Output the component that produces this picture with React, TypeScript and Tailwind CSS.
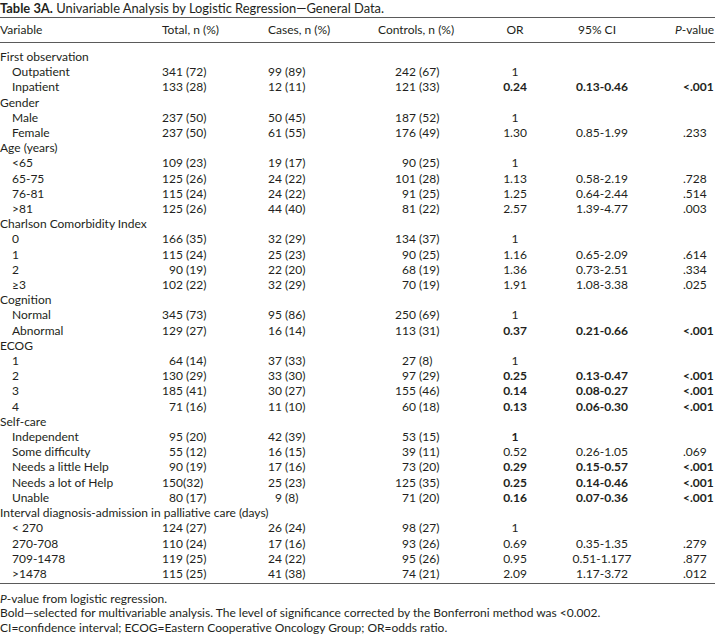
type Row = {
  label: string;
  group?: boolean;
  total?: [string, string];
  cases?: [string, string];
  controls?: [string, string];
  or?: string;
  ci?: string;
  p?: string;
  bold?: boolean;
  boldOr?: boolean;
};

const ROWS: Row[] = [
  { label: "First observation", group: true },
  { label: "Outpatient", total: ["341", " (72)"], cases: ["99", " (89)"], controls: ["242", " (67)"], or: "1" },
  { label: "Inpatient", total: ["133", " (28)"], cases: ["12", " (11)"], controls: ["121", " (33)"], or: "0.24", ci: "0.13-0.46", p: "<.001", bold: true },
  { label: "Gender", group: true },
  { label: "Male", total: ["237", " (50)"], cases: ["50", " (45)"], controls: ["187", " (52)"], or: "1" },
  { label: "Female", total: ["237", " (50)"], cases: ["61", " (55)"], controls: ["176", " (49)"], or: "1.30", ci: "0.85-1.99", p: ".233" },
  { label: "Age (years)", group: true },
  { label: "<65", total: ["109", " (23)"], cases: ["19", " (17)"], controls: ["90", " (25)"], or: "1" },
  { label: "65-75", total: ["125", " (26)"], cases: ["24", " (22)"], controls: ["101", " (28)"], or: "1.13", ci: "0.58-2.19", p: ".728" },
  { label: "76-81", total: ["115", " (24)"], cases: ["24", " (22)"], controls: ["91", " (25)"], or: "1.25", ci: "0.64-2.44", p: ".514" },
  { label: ">81", total: ["125", " (26)"], cases: ["44", " (40)"], controls: ["81", " (22)"], or: "2.57", ci: "1.39-4.77", p: ".003" },
  { label: "Charlson Comorbidity Index", group: true },
  { label: "0", total: ["166", " (35)"], cases: ["32", " (29)"], controls: ["134", " (37)"], or: "1" },
  { label: "1", total: ["115", " (24)"], cases: ["25", " (23)"], controls: ["90", " (25)"], or: "1.16", ci: "0.65-2.09", p: ".614" },
  { label: "2", total: ["90", " (19)"], cases: ["22", " (20)"], controls: ["68", " (19)"], or: "1.36", ci: "0.73-2.51", p: ".334" },
  { label: "≥3", total: ["102", " (22)"], cases: ["32", " (29)"], controls: ["70", " (19)"], or: "1.91", ci: "1.08-3.38", p: ".025" },
  { label: "Cognition", group: true },
  { label: "Normal", total: ["345", " (73)"], cases: ["95", " (86)"], controls: ["250", " (69)"], or: "1" },
  { label: "Abnormal", total: ["129", " (27)"], cases: ["16", " (14)"], controls: ["113", " (31)"], or: "0.37", ci: "0.21-0.66", p: "<.001", bold: true },
  { label: "ECOG", group: true },
  { label: "1", total: ["64", " (14)"], cases: ["37", " (33)"], controls: ["27", " (8)"], or: "1" },
  { label: "2", total: ["130", " (29)"], cases: ["33", " (30)"], controls: ["97", " (29)"], or: "0.25", ci: "0.13-0.47", p: "<.001", bold: true },
  { label: "3", total: ["185", " (41)"], cases: ["30", " (27)"], controls: ["155", " (46)"], or: "0.14", ci: "0.08-0.27", p: "<.001", bold: true },
  { label: "4", total: ["71", " (16)"], cases: ["11", " (10)"], controls: ["60", " (18)"], or: "0.13", ci: "0.06-0.30", p: "<.001", bold: true },
  { label: "Self-care", group: true },
  { label: "Independent", total: ["95", " (20)"], cases: ["42", " (39)"], controls: ["53", " (15)"], or: "1", boldOr: true },
  { label: "Some difficulty", total: ["55", " (12)"], cases: ["16", " (15)"], controls: ["39", " (11)"], or: "0.52", ci: "0.26-1.05", p: ".069" },
  { label: "Needs a little Help", total: ["90", " (19)"], cases: ["17", " (16)"], controls: ["73", " (20)"], or: "0.29", ci: "0.15-0.57", p: "<.001", bold: true },
  { label: "Needs a lot of Help", total: ["150", "(32)"], cases: ["25", " (23)"], controls: ["125", " (35)"], or: "0.25", ci: "0.14-0.46", p: "<.001", bold: true },
  { label: "Unable", total: ["80", " (17)"], cases: ["9", " (8)"], controls: ["71", " (20)"], or: "0.16", ci: "0.07-0.36", p: "<.001", bold: true },
  { label: "Interval diagnosis-admission in palliative care (days)", group: true },
  { label: "< 270", total: ["124", " (27)"], cases: ["26", " (24)"], controls: ["98", " (27)"], or: "1" },
  { label: "270-708", total: ["110", " (24)"], cases: ["17", " (16)"], controls: ["93", " (26)"], or: "0.69", ci: "0.35-1.35", p: ".279" },
  { label: "709-1478", total: ["119", " (25)"], cases: ["24", " (22)"], controls: ["95", " (26)"], or: "0.95", ci: "0.51-1.177", p: ".877" },
  { label: ">1478", total: ["115", " (25)"], cases: ["41", " (38)"], controls: ["74", " (21)"], or: "2.09", ci: "1.17-3.72", p: ".012" },
];

const GRID = "grid grid-cols-[162px_106px_127px_95px_50px_124px_51px]";

function Count({ value, w }: { value?: [string, string]; w: string }) {
  if (!value) return <span />;
  return (
    <span className="flex whitespace-pre">
      <span className={`${w} text-right`}>{value[0]}</span>
      <span>{value[1]}</span>
    </span>
  );
}

export default function App() {
  return (
    <div
      className="w-[715px] bg-white text-[12px] leading-[15.2px] text-[#231f20]"
      style={{ fontFamily: "Lato, 'Liberation Sans', sans-serif" }}
    >
      <div className="h-[17px] whitespace-nowrap text-[12.9px] leading-[16px]">
        <span className="font-bold">Table 3A.</span> Univariable Analysis by Logistic Regression—General Data.
      </div>

      <div className="border-t border-b border-[#5a5a5a]">
        <div className={`${GRID} h-[24px] items-center`}>
          <span>Variable</span>
          <span>Total, n (%)</span>
          <span>Cases, n (%)</span>
          <span className="-ml-[17px] whitespace-nowrap">Controls, n (%)</span>
          <span className="text-center">OR</span>
          <span className="pr-[10px] text-center">95% CI</span>
          <span className="whitespace-nowrap pl-[11px]">
            <i>P</i>-value
          </span>
        </div>
      </div>

      <div className="border-b border-[#5a5a5a] pt-[6px] pb-[2px]">
        {ROWS.map((r, i) => (
          <div key={i} className={`${GRID} whitespace-nowrap`}>
            <span className={r.group ? "" : "pl-3"}>{r.label}</span>
            <Count value={r.total} w="w-[21px]" />
            <Count value={r.cases} w="w-[14px]" />
            <Count value={r.controls} w="w-[21px]" />
            <span className={`text-center ${r.bold || r.boldOr ? "font-bold" : ""}`}>{r.or}</span>
            <span className={`text-center ${r.bold ? "font-bold" : ""}`}>{r.ci}</span>
            <span className={`pl-[19px] ${r.bold ? "font-bold" : ""}`}>{r.p}</span>
          </div>
        ))}
      </div>

      <div className="pt-[8px] leading-[14.3px]">
        <p>
          <i>P</i>-value from logistic regression.
        </p>
        <p>
          Bold—selected for multivariable analysis. The level of significance corrected by the Bonferroni method was
          &lt;0.002.
        </p>
        <p>CI=confidence interval; ECOG=Eastern Cooperative Oncology Group; OR=odds ratio.</p>
      </div>
    </div>
  );
}
